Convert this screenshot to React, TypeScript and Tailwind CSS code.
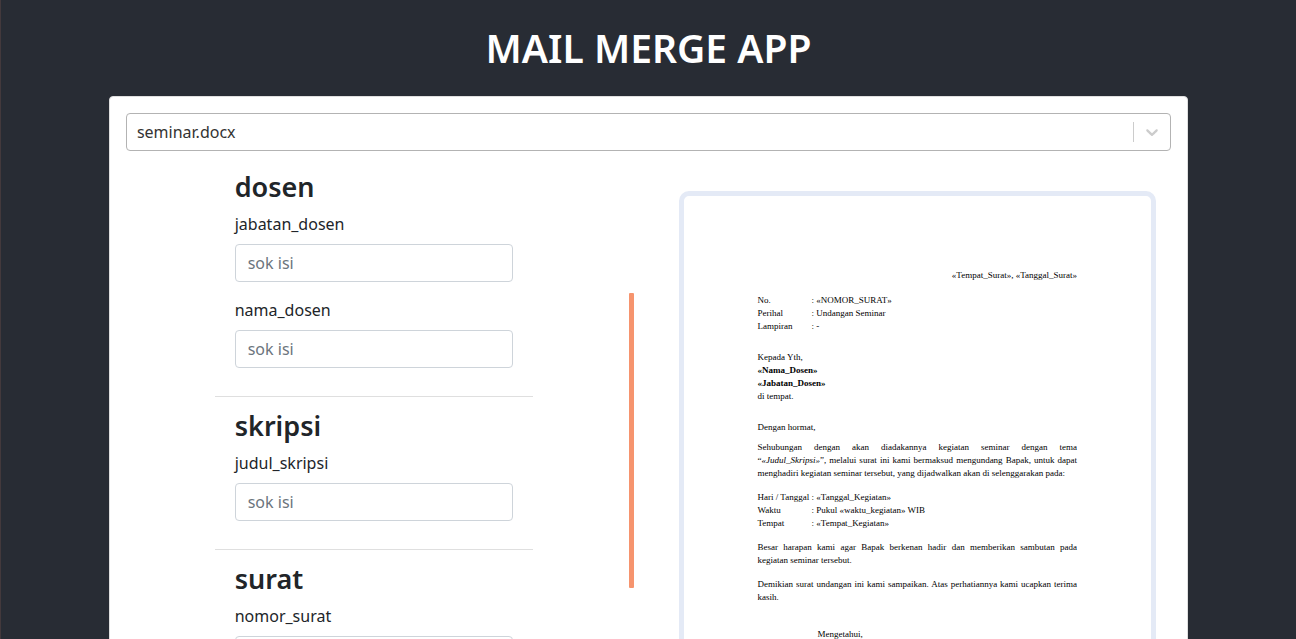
import { useState } from "react";

type FieldGroup = { name: string; fields: string[] };

const groups: FieldGroup[] = [
  { name: "dosen", fields: ["jabatan_dosen", "nama_dosen"] },
  { name: "skripsi", fields: ["judul_skripsi"] },
  { name: "surat", fields: ["nomor_surat"] },
];

function TemplateSelect() {
  const [value, setValue] = useState("seminar.docx");
  return (
    <div className="relative">
      <select
        aria-label="Template"
        value={value}
        onChange={(e) => setValue(e.target.value)}
        className="block h-[38px] w-full appearance-none rounded border border-[#b3b3b3] bg-white px-2.5 pr-12 text-base text-[#333333]"
      >
        <option>seminar.docx</option>
      </select>
      <div className="pointer-events-none absolute inset-y-0 right-px flex items-center gap-2">
        <span className="h-5 w-px bg-[#cccccc]" />
        <svg viewBox="0 0 20 20" className="mr-2 h-5 w-5 fill-[#cccccc]" aria-hidden="true">
          <path d="M4.516 7.548c0.436-0.446 1.043-0.481 1.576 0l3.908 3.747 3.908-3.747c0.533-0.481 1.141-0.446 1.574 0 0.436 0.445 0.408 1.197 0 1.615-0.406 0.418-4.695 4.502-4.695 4.502-0.217 0.223-0.502 0.335-0.787 0.335s-0.57-0.112-0.789-0.335c0 0-4.287-4.084-4.695-4.502s-0.436-1.17 0-1.615z" />
        </svg>
      </div>
    </div>
  );
}

function Field({ name }: { name: string }) {
  return (
    <div className="mb-4">
      <label htmlFor={name} className="mb-2 block leading-6">
        {name}
      </label>
      <input
        id={name}
        type="text"
        placeholder="sok isi"
        className="block h-[38px] w-full rounded border border-[#ced4da] bg-white px-3 text-base text-[#495057] placeholder:text-[#6c757d]"
      />
    </div>
  );
}

function MergeForm() {
  return (
    <form className="mx-auto w-full max-w-[318px]">
      {groups.map((group) => (
        <section key={group.name} className="mb-3 border-b border-[#dfdfdf] px-5 pb-3">
          <h3 className="mb-2 text-[27px] leading-[34px] font-semibold">{group.name}</h3>
          {group.fields.map((field) => (
            <Field key={field} name={field} />
          ))}
        </section>
      ))}
    </form>
  );
}

function Details({ rows }: { rows: [string, string][] }) {
  return (
    <dl className="grid grid-cols-[54px_1fr] whitespace-nowrap">
      {rows.map(([term, value]) => (
        <div key={term} className="contents">
          <dt>{term}</dt>
          <dd>: {value}</dd>
        </div>
      ))}
    </dl>
  );
}

function Letter() {
  return (
    <article className="rounded-[10px] border-[5px] border-[#e4eaf6] bg-white px-[74px] pt-[73px] pb-16 font-['Liberation_Serif',serif] text-[9px] leading-[13px] text-black">
      <p className="mb-3 text-right">«Tempat_Surat», «Tanggal_Surat»</p>
      <Details
        rows={[
          ["No.", "«NOMOR_SURAT»"],
          ["Perihal", "Undangan Seminar"],
          ["Lampiran", "-"],
        ]}
      />
      <div className="my-[18px]">
        <p>Kepada Yth,</p>
        <p className="font-bold">«Nama_Dosen»</p>
        <p className="font-bold">«Jabatan_Dosen»</p>
        <p>di tempat.</p>
      </div>
      <p className="mb-[7px]">Dengan hormat,</p>
      <p className="mb-[11px] text-justify">
        Sehubungan dengan akan diadakannya kegiatan seminar dengan tema “<i>«Judul_Skripsi»</i>”, melalui surat ini
        kami bermaksud mengundang Bapak, untuk dapat menghadiri kegiatan seminar tersebut, yang dijadwalkan akan di
        selenggarakan pada:
      </p>
      <Details
        rows={[
          ["Hari / Tanggal", "«Tanggal_Kegiatan»"],
          ["Waktu", "Pukul «waktu_kegiatan» WIB"],
          ["Tempat", "«Tempat_Kegiatan»"],
        ]}
      />
      <p className="my-[11px] text-justify">
        Besar harapan kami agar Bapak berkenan hadir dan memberikan sambutan pada kegiatan seminar tersebut.
      </p>
      <p className="mb-6 text-justify">
        Demikian surat undangan ini kami sampaikan. Atas perhatiannya kami ucapkan terima kasih.
      </p>
      <p className="pl-[60px]">Mengetahui,</p>
    </article>
  );
}

export default function App() {
  return (
    <div className="min-h-screen border-l border-[#43393c] bg-[#282c34] font-['Noto_Sans',sans-serif] text-base text-[#212529]">
      <h1 className="py-6 text-center text-[39px] leading-[48px] font-semibold text-white">MAIL MERGE APP</h1>
      <main className="mx-auto w-10/12 rounded border border-[#dfdfdf] bg-white p-4">
        <TemplateSelect />
        <div className="grid grid-cols-2">
          <div className="flex pt-[19px]">
            <div className="mr-[7px] flex-1">
              <MergeForm />
            </div>
            <div className="mt-[123px] mr-[15px] h-[295px] w-[5px] rounded-[1px] bg-[#f6946e]" />
          </div>
          <div className="pt-10 pr-[15px] pl-[30px]">
            <Letter />
          </div>
        </div>
      </main>
    </div>
  );
}
